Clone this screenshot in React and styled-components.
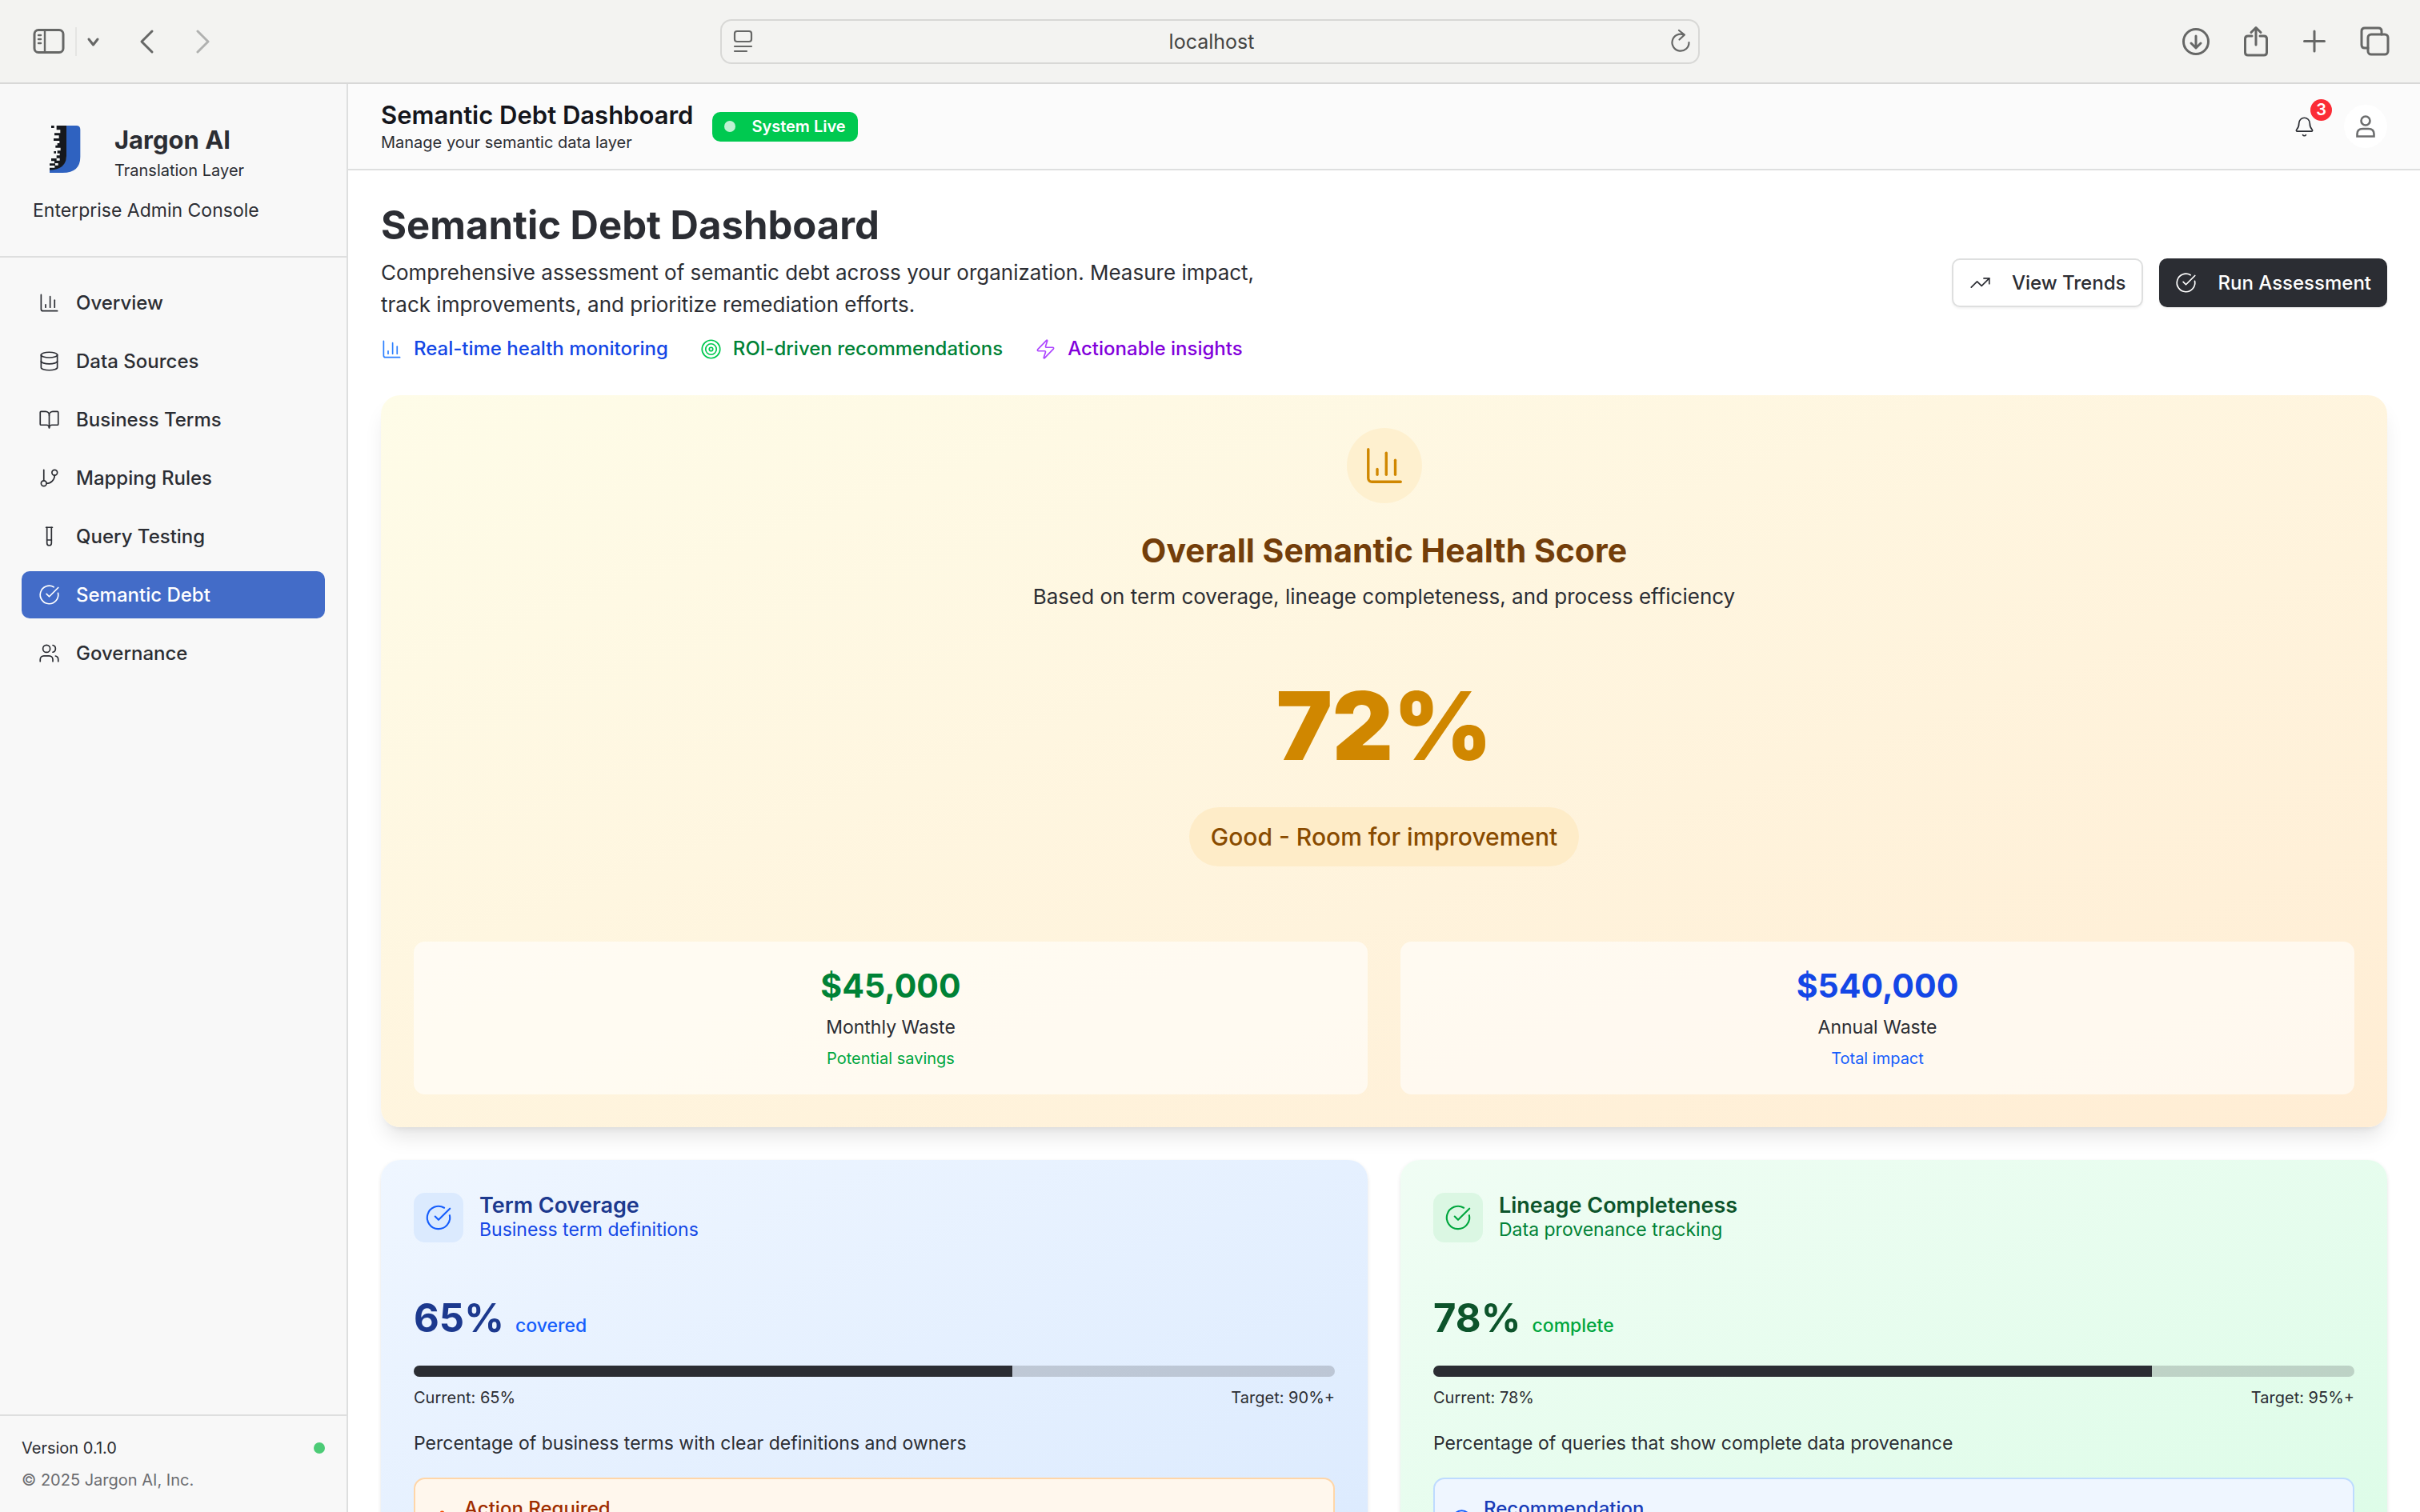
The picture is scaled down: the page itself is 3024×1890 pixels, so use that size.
import React from 'react';
import styled, { createGlobalStyle } from 'styled-components';
import {
  ChartColumn, Database, BookOpen, GitBranch, TestTube, CircleCheckBig, Users,
  TrendingUp, Target, Zap, Bell, TriangleAlert,
} from 'lucide-react';

const ink = '#2b2d33';
const line = '#dedfdf';

const GlobalStyle = createGlobalStyle`
  *, *::before, *::after { box-sizing: border-box; }
  body {
    margin: 0;
    background: #fff;
    color: ${ink};
    font-family: Inter, "Liberation Sans", sans-serif;
    font-size: 23px;
    line-height: 34px;
  }
  h1, h2, h3, p { margin: 0; }
  button { font: inherit; color: inherit; cursor: pointer; }
  svg { display: block; flex: none; }
`;

const Window = styled.div`
  height: 100vh;
  display: flex;
  flex-direction: column;
  overflow: hidden;
`;

const Toolbar = styled.header`
  flex: none;
  height: 105px;
  display: grid;
  grid-template-columns: 1fr minmax(0, 1224px) 1fr;
  align-items: center;
  padding: 0 38px;
  background: #f3f3f1;
  border-bottom: 2px solid #d8d8d7;
  color: #666766;
`;

const ToolGroup = styled.div`
  display: flex;
  align-items: center;
  justify-content: ${(p) => (p.$end ? 'flex-end' : 'flex-start')};
  gap: ${(p) => p.$gap}px;
`;

const ToolButton = styled.button`
  display: flex;
  padding: 0;
  border: 0;
  background: none;
  color: ${(p) => (p.$dim ? '#b0b1b0' : '#666766')};
`;

const ToolDivider = styled.span`
  width: 2px;
  height: 36px;
  background: #e5e5e3;
`;

const AddressBar = styled.div`
  height: 56px;
  display: flex;
  align-items: center;
  gap: 12px;
  padding: 0 8px 0 14px;
  border: 2px solid #d8d8d6;
  border-radius: 14px;
`;

const AddressInput = styled.input`
  flex: 1;
  min-width: 0;
  border: 0;
  outline: 0;
  background: none;
  color: #434443;
  font: inherit;
  font-size: 25px;
  text-align: center;
`;

const Shell = styled.div`
  flex: 1;
  min-height: 0;
  display: flex;
`;

const Sidebar = styled.aside`
  flex: none;
  width: 435px;
  display: flex;
  flex-direction: column;
  background: #f8f8f8;
  border-right: 2px solid ${line};
`;

const Brand = styled.div`
  display: flex;
  flex-direction: column;
  gap: 19px;
  padding: 40px 41px;
  border-bottom: 2px solid ${line};
`;

const BrandRow = styled.div`
  display: flex;
  align-items: flex-end;
  gap: 20px;
`;

const BrandText = styled.div`
  display: flex;
  flex-direction: column;
  gap: 4px;
`;

const BrandName = styled.p`
  font-size: 31px;
  font-weight: 700;
  line-height: 40px;
`;

const Small = styled.p`
  font-size: 20px;
  line-height: 28px;
  color: ${(p) => p.$color || ink};
`;

const Nav = styled.nav`
  flex: 1;
  display: flex;
  flex-direction: column;
  gap: 14px;
  padding: 27px;
`;

const NavLink = styled.a`
  display: flex;
  align-items: center;
  gap: 20px;
  height: 59px;
  padding: 0 21px;
  border-radius: 10px;
  font-size: 24px;
  font-weight: 500;
  text-decoration: none;
  color: ${(p) => (p.$active ? '#fff' : ink)};
  background: ${(p) => (p.$active ? '#436cc8' : 'transparent')};
`;

const SideFooter = styled.footer`
  display: flex;
  flex-direction: column;
  gap: 12px;
  padding: 26px 27px;
  border-top: 2px solid ${line};
`;

const Spread = styled.div`
  display: flex;
  align-items: center;
  justify-content: space-between;
`;

const Dot = styled.span`
  width: 14px;
  height: 14px;
  border-radius: 50%;
  background: ${(p) => p.$color};
`;

const Main = styled.main`
  flex: 1;
  min-width: 0;
  display: flex;
  flex-direction: column;
`;

const TopBar = styled.div`
  flex: none;
  height: 108px;
  display: flex;
  align-items: center;
  justify-content: space-between;
  padding: 0 41px;
  background: #fbfbfb;
  border-bottom: 2px solid ${line};
`;

const TopTitle = styled.p`
  font-size: 31px;
  font-weight: 600;
  line-height: 40px;
  color: #14151b;
`;

const Row = styled.div`
  display: flex;
  align-items: center;
  gap: ${(p) => p.$gap}px;
`;

const LiveBadge = styled.span`
  display: flex;
  align-items: center;
  gap: 20px;
  height: 37px;
  padding: 0 15px;
  border-radius: 10px;
  background: #00c950;
  color: #fff;
  font-size: 20px;
  font-weight: 600;
`;

const BellButton = styled.button`
  position: relative;
  display: flex;
  padding: 14px;
  border: 0;
  background: none;
`;

const Count = styled.span`
  position: absolute;
  top: -7px;
  right: -7px;
  width: 27px;
  height: 27px;
  border-radius: 50%;
  background: #fb2c36;
  color: #fff;
  font-size: 20px;
  font-weight: 600;
  line-height: 27px;
  text-align: center;
`;

const Avatar = styled.button`
  display: flex;
  align-items: center;
  justify-content: center;
  width: 54px;
  height: 54px;
  padding: 0;
  border: 0;
  border-radius: 50%;
  background: #fff;
`;

const Content = styled.div`
  flex: 1;
  min-height: 0;
  overflow: hidden;
  display: flex;
  flex-direction: column;
  gap: 41px;
  padding: 41px;
`;

const Intro = styled.section`
  flex: none;
  display: flex;
  align-items: center;
  justify-content: space-between;
`;

const PageTitle = styled.h1`
  font-size: 49px;
  font-weight: 700;
  line-height: 56px;
`;

const Lead = styled.p`
  max-width: 1150px;
  margin-top: 11px;
  font-size: 26px;
  line-height: 40px;
`;

const Features = styled.div`
  display: flex;
  gap: 40px;
  margin-top: 18px;
`;

const Feature = styled.div`
  display: flex;
  align-items: center;
  gap: 14px;
  font-size: 24px;
  font-weight: 500;
  color: ${(p) => p.$color};
  svg { color: ${(p) => p.$icon}; }
`;

const Action = styled.button`
  display: flex;
  align-items: center;
  gap: 26px;
  height: 61px;
  padding: 0 20px;
  border-radius: 10px;
  font-size: 24px;
  font-weight: 500;
  border: ${(p) => (p.$primary ? '0' : `2px solid ${line}`)};
  background: ${(p) => (p.$primary ? ink : '#fff')};
  color: ${(p) => (p.$primary ? '#fff' : ink)};
  box-shadow: 0 2px 3px rgba(0, 0, 0, 0.05);
`;

const ScoreCard = styled.section`
  flex: none;
  display: flex;
  flex-direction: column;
  align-items: center;
  padding: 41px;
  border-radius: 24px;
  background: linear-gradient(to bottom right, #fefce8, #ffedd4);
  box-shadow: 0 17px 26px -5px rgba(0, 0, 0, 0.1), 0 7px 10px -7px rgba(0, 0, 0, 0.1);
`;

const ScoreIcon = styled.span`
  padding: 20px;
  border-radius: 50%;
  background: #fef0cf;
  color: #d08700;
`;

const ScoreTitle = styled.h2`
  margin-top: 31px;
  font-size: 41px;
  font-weight: 700;
  line-height: 56px;
  color: #733e0a;
`;

const ScoreNote = styled.p`
  margin-top: 10px;
  font-size: 26px;
  line-height: 40px;
`;

const Score = styled.p`
  margin-top: 80px;
  font-size: 118px;
  font-weight: 900;
  line-height: 122px;
  color: #d08700;
`;

const Verdict = styled.p`
  margin-top: 41px;
  padding: 17px 27px;
  border-radius: 37px;
  background: #feecc8;
  color: #894b00;
  font-size: 30px;
  font-weight: 500;
  line-height: 40px;
`;

const TwoUp = styled.div`
  flex: none;
  align-self: stretch;
  display: grid;
  grid-template-columns: 1fr 1fr;
  gap: 41px;
  margin-top: ${(p) => p.$top || 0}px;
`;

const Stat = styled.div`
  display: flex;
  flex-direction: column;
  align-items: center;
  gap: 8px;
  padding: 28px 27px 31px;
  border-radius: 14px;
  background: rgba(255, 255, 255, 0.6);
`;

const StatValue = styled.p`
  font-size: 41px;
  font-weight: 700;
  line-height: 54px;
  color: ${(p) => p.$color};
`;

const MetricCard = styled.section`
  display: flex;
  flex-direction: column;
  padding: 41px;
  border-radius: 24px;
  background: linear-gradient(to bottom right, ${(p) => p.$tone.from}, ${(p) => p.$tone.to});
  box-shadow: 0 2px 5px rgba(0, 0, 0, 0.1), 0 2px 3px -2px rgba(0, 0, 0, 0.1);
`;

const IconTile = styled.span`
  padding: 14px;
  border-radius: 14px;
  background: ${(p) => p.$tone.tile};
  color: ${(p) => p.$tone.accent};
`;

const MetricTitle = styled.h3`
  font-size: 27px;
  font-weight: 600;
  line-height: 30px;
  color: ${(p) => p.$color};
`;

const MetricSub = styled.p`
  line-height: 30px;
  color: ${(p) => p.$color};
`;

const MetricValue = styled.p`
  display: flex;
  align-items: baseline;
  gap: 14px;
  margin-top: 64px;
  font-weight: 500;
  color: ${(p) => p.$tone.accent};
`;

const Big = styled.span`
  font-size: 49px;
  font-weight: 700;
  line-height: 62px;
  color: ${(p) => p.$color};
`;

const Track = styled.div`
  height: 14px;
  margin: 28px 0 12px;
  border-radius: 7px;
  overflow: hidden;
  background: rgba(43, 45, 51, 0.2);
`;

const Fill = styled.div`
  height: 100%;
  background: ${ink};
`;

const Description = styled.p`
  margin-top: 26px;
`;

const Callout = styled.div`
  display: flex;
  gap: 14px;
  margin-top: 26px;
  padding: 20px;
  border: 2px solid ${(p) => p.$tone.noteLine};
  border-radius: 14px;
  background: ${(p) => p.$tone.noteBg};
  color: ${(p) => p.$tone.noteInk};
  font-size: 24px;
  font-weight: 500;
  svg { margin-top: 17px; color: ${(p) => p.$tone.noteIcon}; }
`;

function BrandLogo() {
  return (
    <svg width="82" height="82" viewBox="3 15 246 246" aria-hidden="true">
      <path d="M128 51h38q15 0 15 15v102q0 60-66 60H66v-11q62-4 62-52z" fill="#2f62c0" />
      <path
        d="M92 51h37v114q0 50-63 53v-9h19v-8H66v-8h21v7h11v-8H84v-8H72v-10h20v8h12v-9H92v-10h12v-8H95v-10h12v-11H88v-9h7v-8h8v-9H81v-9h20v-11H84v-9h22v-12H92z"
        fill="#16181d"
      />
      <path d="M72 51h11v9H72zM82 147h8v8h-8z" fill="#16181d" />
    </svg>
  );
}

const stroke = { fill: 'none', stroke: 'currentColor', strokeWidth: 3, strokeLinecap: 'round', strokeLinejoin: 'round' };

const SidebarIcon = () => (
  <svg width="44" height="36" viewBox="2 0 44 36" {...stroke}>
    <rect x="7" y="3.5" width="36" height="28" rx="5" />
    <path d="M20 4v27M12 10h3M12 15h3M12 20h3" strokeWidth="2.4" />
  </svg>
);
const SmallDown = () => <svg width="20" height="20" viewBox="1 0 20 20" {...stroke}><path d="M4 7l5.500 7L15 7" /></svg>;
const Back = () => <svg width="30" height="36" viewBox="0 0 30 36" {...stroke}><path d="M22 5L9 18l13 13" /></svg>;
const Forward = () => <svg width="30" height="36" viewBox="0 0 30 36" {...stroke}><path d="M9 5l13 13L9 31" /></svg>;
const Reader = () => (
  <svg width="26" height="32" viewBox="0 0 26 32" {...stroke} strokeWidth="2.2">
    <rect x="2" y="3" width="21" height="13" rx="3" /><path d="M2 22h21M2 28h15" />
  </svg>
);
const Reload = () => (
  <svg width="28" height="32" viewBox="0 0 28 32" {...stroke} strokeWidth="2.2">
    <path d="M18 7.500A10.500 10.500 0 1 0 24.500 17M12 2l7 5.500-6.500 6" />
  </svg>
);
const Download = () => (
  <svg width="36" height="40" viewBox="0 0 36 40" {...stroke}>
    <circle cx="18" cy="20" r="15.500" /><path d="M18 13v14M12 22l6 6 6-6" />
  </svg>
);
const Share = () => (
  <svg width="34" height="40" viewBox="0 0 34 40" {...stroke}>
    <path d="M12 13H7q-3.500 0-3.500 3.500v17Q3.500 37 7 37h20q3.500 0 3.500-3.500v-17Q30.500 13 27 13h-5M17 24V3M11 8.500L17 2.500l6 6" />
  </svg>
);
const Plus = () => <svg width="32" height="40" viewBox="0 0 32 40" {...stroke}><path d="M16 7v25M3.500 19.500h25" /></svg>;
const Tabs = () => (
  <svg width="38" height="40" viewBox="0 0 38 40" {...stroke}>
    <rect x="11" y="11" width="25" height="25" rx="4" />
    <path d="M11 28H7q-4 0-4-4V7q0-4 4-4h17q4 0 4 4v4" />
  </svg>
);
const Person = () => (
  <svg width="28" height="32" viewBox="0 0 28 32" fill="none" stroke="#6d6e6f" strokeWidth="2.600">
    <circle cx="14" cy="9" r="5.500" />
    <path d="M3.500 28.500v-3q0-6.500 7-6.500h7q7 0 7 6.500v3z" />
  </svg>
);
const CircleInfo = () => (
  <svg width="27" height="27" viewBox="0 0 24 24" {...stroke} strokeWidth="1.800">
    <circle cx="12" cy="12" r="10" /><path d="M12 16v-4M12 8h.01" />
  </svg>
);

const navItems = [
  ['Overview', ChartColumn],
  ['Data Sources', Database],
  ['Business Terms', BookOpen],
  ['Mapping Rules', GitBranch],
  ['Query Testing', TestTube],
  ['Semantic Debt', CircleCheckBig],
  ['Governance', Users],
];

const features = [
  ['Real-time health monitoring', ChartColumn, '#1447e6', '#2b7fff'],
  ['ROI-driven recommendations', Target, '#008236', '#00c950'],
  ['Actionable insights', Zap, '#8200db', '#ad46ff'],
];

const metrics = [
  {
    title: 'Term Coverage', sub: 'Business term definitions', value: 65, unit: 'covered', target: 90,
    text: 'Percentage of business terms with clear definitions and owners',
    note: 'Action Required', NoteIcon: TriangleAlert,
    tone: {
      from: '#eff6ff', to: '#dbeafe', tile: '#dbeafe', accent: '#155dfc', title: '#1c398e', sub: '#1447e6',
      noteBg: '#fff7ed', noteLine: '#ffd6a8', noteInk: '#9f2d00', noteIcon: '#f54900',
    },
  },
  {
    title: 'Lineage Completeness', sub: 'Data provenance tracking', value: 78, unit: 'complete', target: 95,
    text: 'Percentage of queries that show complete data provenance',
    note: 'Recommendation', NoteIcon: CircleInfo,
    tone: {
      from: '#f0fdf4', to: '#dcfce7', tile: '#dbf7e3', accent: '#00a63e', title: '#0d542b', sub: '#008236',
      noteBg: '#eff6ff', noteLine: '#bedbff', noteInk: '#193cb8', noteIcon: '#155dfc',
    },
  },
];

function Metric({ data }) {
  const { tone, NoteIcon } = data;
  return (
    <MetricCard $tone={tone}>
      <Row $gap={20}>
        <IconTile $tone={tone}><CircleCheckBig size={34} strokeWidth={1.5} /></IconTile>
        <div>
          <MetricTitle $color={tone.title}>{data.title}</MetricTitle>
          <MetricSub $color={tone.sub}>{data.sub}</MetricSub>
        </div>
      </Row>
      <MetricValue $tone={tone}><Big $color={tone.title}>{data.value}%</Big>{data.unit}</MetricValue>
      <Track role="progressbar" aria-valuenow={data.value} aria-label={data.title}>
        <Fill style={{ width: `${data.value}%` }} />
      </Track>
      <Spread>
        <Small>Current: {data.value}%</Small>
        <Small>Target: {data.target}%+</Small>
      </Spread>
      <Description>{data.text}</Description>
      <Callout $tone={tone}><NoteIcon size={27} strokeWidth={1.5} />{data.note}</Callout>
    </MetricCard>
  );
}

export default function App() {
  return (
    <Window>
      <GlobalStyle />
      <Toolbar>
        <ToolGroup $gap={40}>
          <ToolGroup $gap={12}>
            <ToolButton aria-label="Sidebar"><SidebarIcon /></ToolButton>
            <ToolDivider />
            <ToolButton aria-label="Tab groups"><SmallDown /></ToolButton>
          </ToolGroup>
          <ToolButton aria-label="Back"><Back /></ToolButton>
          <ToolButton $dim aria-label="Forward"><Forward /></ToolButton>
        </ToolGroup>
        <AddressBar>
          <Reader />
          <AddressInput aria-label="Address" defaultValue="localhost" />
          <ToolButton aria-label="Reload"><Reload /></ToolButton>
        </AddressBar>
        <ToolGroup $end $gap={40}>
          <ToolButton aria-label="Downloads"><Download /></ToolButton>
          <ToolButton aria-label="Share"><Share /></ToolButton>
          <ToolButton aria-label="New tab"><Plus /></ToolButton>
          <ToolButton aria-label="Tab overview"><Tabs /></ToolButton>
        </ToolGroup>
      </Toolbar>

      <Shell>
        <Sidebar>
          <Brand>
            <BrandRow>
              <BrandLogo />
              <BrandText>
                <BrandName>Jargon AI</BrandName>
                <Small>Translation Layer</Small>
              </BrandText>
            </BrandRow>
            <p>Enterprise Admin Console</p>
          </Brand>
          <Nav aria-label="Main">
            {navItems.map(([label, Icon]) => (
              <NavLink key={label} href="#" $active={label === 'Semantic Debt'}>
                <Icon size={27} strokeWidth={1.5} />
                {label}
              </NavLink>
            ))}
          </Nav>
          <SideFooter>
            <Spread><Small>Version 0.1.0</Small><Dot $color="#4ccb76" /></Spread>
            <Small $color="#6b6c70">© 2025 Jargon AI, Inc.</Small>
          </SideFooter>
        </Sidebar>

        <Main>
          <TopBar>
            <Row $gap={24}>
              <div>
                <TopTitle>Semantic Debt Dashboard</TopTitle>
                <Small>Manage your semantic data layer</Small>
              </div>
              <LiveBadge><Dot $color="#bff1d3" />System Live</LiveBadge>
            </Row>
            <Row $gap={22}>
              <BellButton aria-label="Notifications">
                <Bell size={27} strokeWidth={1.5} />
                <Count>3</Count>
              </BellButton>
              <Avatar aria-label="Account"><Person /></Avatar>
            </Row>
          </TopBar>

          <Content>
            <Intro>
              <div>
                <PageTitle>Semantic Debt Dashboard</PageTitle>
                <Lead>
                  Comprehensive assessment of semantic debt across your organization. Measure impact,
                  track improvements, and prioritize remediation efforts.
                </Lead>
                <Features>
                  {features.map(([label, Icon, color, icon]) => (
                    <Feature key={label} $color={color} $icon={icon}>
                      <Icon size={27} strokeWidth={1.5} />
                      {label}
                    </Feature>
                  ))}
                </Features>
              </div>
              <Row $gap={20}>
                <Action><TrendingUp size={27} strokeWidth={1.5} />View Trends</Action>
                <Action $primary><CircleCheckBig size={27} strokeWidth={1.5} />Run Assessment</Action>
              </Row>
            </Intro>

            <ScoreCard>
              <ScoreIcon><ChartColumn size={54} strokeWidth={1.5} /></ScoreIcon>
              <ScoreTitle>Overall Semantic Health Score</ScoreTitle>
              <ScoreNote>Based on term coverage, lineage completeness, and process efficiency</ScoreNote>
              <Score>72%</Score>
              <Verdict>Good - Room for improvement</Verdict>
              <TwoUp $top={94}>
                <Stat>
                  <StatValue $color="#008236">$45,000</StatValue>
                  <p>Monthly Waste</p>
                  <Small $color="#00a63e">Potential savings</Small>
                </Stat>
                <Stat>
                  <StatValue $color="#1447e6">$540,000</StatValue>
                  <p>Annual Waste</p>
                  <Small $color="#155dfc">Total impact</Small>
                </Stat>
              </TwoUp>
            </ScoreCard>

            <TwoUp>
              {metrics.map((m) => <Metric key={m.title} data={m} />)}
            </TwoUp>
          </Content>
        </Main>
      </Shell>
    </Window>
  );
}
